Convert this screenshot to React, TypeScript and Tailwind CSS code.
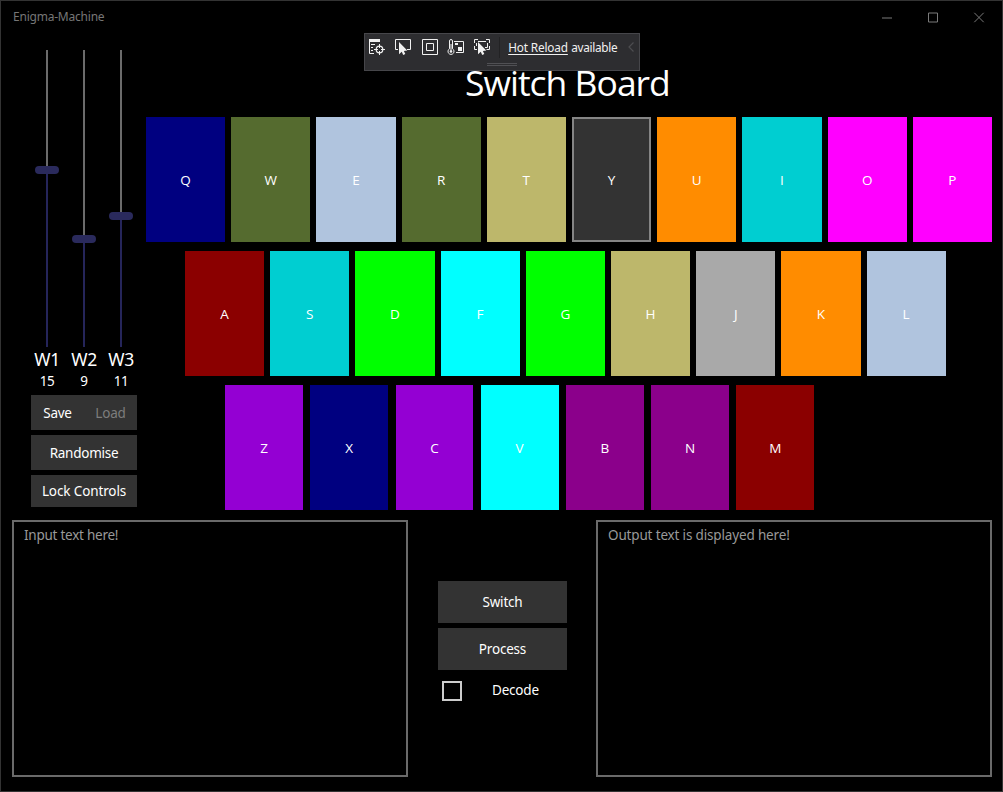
import React from "react";

type KeyDef = { label: string; color: string; selected?: boolean };

const rows: { keys: KeyDef[]; className: string }[] = [
  {
    className: "-ml-[0.1px] gap-[6px] w-[846px]",
    keys: [
      { label: "Q", color: "bg-[#000080]" },
      { label: "W", color: "bg-[#556b2f]" },
      { label: "E", color: "bg-[#b0c4de]" },
      { label: "R", color: "bg-[#556b2f]" },
      { label: "T", color: "bg-[#bdb76b]" },
      { label: "Y", color: "bg-[#333333]", selected: true },
      { label: "U", color: "bg-[#ff8c00]" },
      { label: "I", color: "bg-[#00ced1]" },
      { label: "O", color: "bg-[#ff00ff]" },
      { label: "P", color: "bg-[#ff00ff]" },
    ],
  },
  {
    className: "ml-[38.9px] gap-[6px] w-[760.8px]",
    keys: [
      { label: "A", color: "bg-[#8b0000]" },
      { label: "S", color: "bg-[#00ced1]" },
      { label: "D", color: "bg-[#00ff00]" },
      { label: "F", color: "bg-[#00ffff]" },
      { label: "G", color: "bg-[#00ff00]" },
      { label: "H", color: "bg-[#bdb76b]" },
      { label: "J", color: "bg-[#a9a9a9]" },
      { label: "K", color: "bg-[#ff8c00]" },
      { label: "L", color: "bg-[#b0c4de]" },
    ],
  },
  {
    className: "ml-[79.1px] gap-[7.4px] w-[589px]",
    keys: [
      { label: "Z", color: "bg-[#9400d3]" },
      { label: "X", color: "bg-[#000080]" },
      { label: "C", color: "bg-[#9400d3]" },
      { label: "V", color: "bg-[#00ffff]" },
      { label: "B", color: "bg-[#8b008b]" },
      { label: "N", color: "bg-[#8b008b]" },
      { label: "M", color: "bg-[#8b0000]" },
    ],
  },
];

const wheels = [
  { name: "W1", value: 15, above: "h-[116px]" },
  { name: "W2", value: 9, above: "h-[185px]" },
  { name: "W3", value: 11, above: "h-[162px]" },
];

function Wheel({ name, value, above }: { name: string; value: number; above: string }) {
  return (
    <div className="flex w-9 flex-col items-center">
      <div className="flex h-[297px] flex-col items-center">
        <div className={`w-[2px] shrink-0 bg-[#6b6b6b] ${above}`} />
        <div className="h-2 w-6 shrink-0 rounded-full bg-[#2a2a5c]" />
        <div className="w-[2px] flex-1 bg-[#25255a]" />
      </div>
      <div className="h-[25px] whitespace-nowrap text-[17.5px] leading-6 tracking-[-0.3px]">{name}</div>
      <div className="h-[19px] text-[13.5px] leading-[19px] tracking-[-0.4px]">{value}</div>
    </div>
  );
}

const Cursor = () => (
  <path d="M4 3V15.2L6.8 12.8L8.2 16L10.3 15L8.9 12L12.3 11.4Z" fill="#f1f1f1" stroke="none" />
);

function Icon({ children }: { children: React.ReactNode }) {
  return (
    <svg width="16" height="16" viewBox="0 0 16 16" fill="none" stroke="#f1f1f1" className="shrink-0 overflow-visible">
      {children}
    </svg>
  );
}

function DebugToolbar() {
  return (
    <div className="absolute left-[363px] top-[32px] h-[38px] w-[276px] border border-[#46464a] bg-[#2d2d30]">
      <div className="flex h-[26px] items-center pl-1">
        <div className="flex gap-[10.3px]">
          <Icon>
            <path d="M0 0H11V3H0Z" fill="#f1f1f1" stroke="none" />
            <path d="M.5 3V14.5H5M2 5.5H6M2 8.5H4M2 11.5H4" />
            <circle cx="10.5" cy="10.5" r="3.3" strokeWidth="1.2" />
            <path d="M10.5 5V9M10.5 12V16M5 10.5H9M12 10.5H16" />
          </Icon>
          <Icon>
            <path d="M3 10.5H.5V.5H15.5V10.5H12" />
            <Cursor />
          </Icon>
          <Icon>
            <path d="M.5 .5H15.5V15.5H.5ZM4.5 4.5H11.5V11.5H4.5Z" />
          </Icon>
          <Icon>
            <path d="M1.5 9.8V2A1.5 1.5 0 0 1 4.5 2V9.8A3 3 0 1 1 1.5 9.8Z" />
            <path d="M3 5V12" />
            <circle cx="3" cy="12.5" r="1.3" fill="#f1f1f1" stroke="none" />
            <path d="M6 2.5H15.5V13.5H8" />
            <path d="M7 4H10V6H7ZM10 8H14V12H10Z" fill="#f1f1f1" stroke="none" />
          </Icon>
          <Icon>
            <path d="M.5 4V.5H4M12 .5H15.5V4M15.5 7V10.5H12.5M3 10.5H.5V7M4 2.5H12M13.5 4V8.5H11M2.5 4V7" />
            <Cursor />
          </Icon>
        </div>
        <div className="ml-[9px] h-[21px] w-px bg-[#222224]" />
        <div className="ml-[8px] flex gap-[4px] whitespace-nowrap pb-px text-[11.8px] leading-4 text-[#f1f1f1]">
          <span className="w-[59px] tracking-[-0.16px] underline underline-offset-2">Hot Reload</span>
          <span className="w-[46px] tracking-[-0.3px]">available</span>
        </div>
        <svg width="6" height="10" viewBox="0 0 6 10" className="ml-[11px]" fill="none" stroke="#4d4d50" strokeWidth="1.2">
          <path d="M5.5 .5L1 5L5.5 9.5" />
        </svg>
      </div>
      <div className="ml-[122px] mt-[3px] h-[3px] w-[30px] border-y border-[#505054]" />
    </div>
  );
}

const Button = ({ children, className }: { children: React.ReactNode; className: string }) => (
  <button className={`flex items-center justify-center whitespace-nowrap bg-[#333333] text-[13.5px] ${className}`}>
    {children}
  </button>
);

export default function App() {
  return (
    <div className="relative flex h-[792px] w-[1003px] flex-col overflow-hidden border border-[#333333] bg-black font-['Noto_Sans','Open_Sans',sans-serif] text-white">
      <header className="flex h-[31px] shrink-0 items-center justify-between pl-3 text-[#767676]">
        <span className="text-[12px] leading-4 tracking-[-0.22px]">Enigma-Machine</span>
        <svg width="106" height="12" viewBox="0 0 106 12" className="mr-[14px]" fill="none" stroke="#7a7a7a">
          <path d="M0 7H10M46.5 2H55.5V11H46.5ZM92.3 1.8L101.7 11.2M101.7 1.8L92.3 11.2" />
        </svg>
      </header>

      <main className="flex h-[478px] shrink-0">
        <aside className="w-[144px] shrink-0 pl-[28px] pt-[18px]">
          <div className="flex gap-px">
            {wheels.map((w) => (
              <Wheel key={w.name} {...w} />
            ))}
          </div>
          <div className="ml-[2px] mt-[4px] flex w-[106px] flex-col gap-[5px]">
            <div className="flex bg-[#333333]">
              <Button className="h-[35px] w-[53px] pt-[2px] tracking-[-0.3px]">Save</Button>
              <Button className="h-[35px] w-[53px] pt-[2px] tracking-[-0.2px] text-[#7d7d7d]">Load</Button>
            </div>
            <Button className="h-[35px] pt-[2px] tracking-[-0.25px]">Randomise</Button>
            <Button className="h-8 tracking-[-0.12px]">Lock Controls</Button>
          </div>
        </aside>

        <section className="w-[857px]">
          <h1 className="flex h-[85px] items-end pb-[10px] pl-[320px] font-['Open_Sans',sans-serif] text-[35.5px] leading-[50px] tracking-[-1px]">
            <span className="whitespace-nowrap">Switch Board</span>
          </h1>
          <div className="ml-px flex flex-col gap-[9px] font-['Open_Sans',sans-serif]">
            {rows.map((row, i) => (
              <div key={i} className={`flex h-[125px] ${row.className}`}>
                {row.keys.map((k) => (
                  <button
                    key={k.label}
                    className={`flex flex-1 items-center justify-center pt-[2px] text-[13.5px] ${k.color} ${
                      k.selected ? "inset-ring-2 inset-ring-[#858585]" : ""
                    }`}
                  >
                    {k.label}
                  </button>
                ))}
              </div>
            ))}
          </div>
        </section>
      </main>

      <footer className="flex px-[11px] pt-[10px]">
        <div className="h-[257px] w-[396px] shrink-0 border-2 border-[#6a6a6a] px-[10px] pt-[3px] text-[13.5px] leading-5 tracking-[-0.25px] text-[#999999]">
          Input text here!
        </div>
        <div className="flex w-[188px] shrink-0 flex-col gap-[5px] pl-[30px] pt-[61px]">
          <Button className="h-[42px] w-[129px] tracking-[-0.2px]">Switch</Button>
          <Button className="h-[42px] w-[129px] tracking-[-0.2px]">Process</Button>
          <label className="flex h-8 items-center pl-1 text-[13.5px]">
            <span className="h-5 w-5 border-2 border-[#cccccc]" />
            <span className="ml-[30px] pb-[2px] tracking-[-0.2px]">Decode</span>
          </label>
        </div>
        <div className="h-[257px] w-[396px] shrink-0 border-2 border-[#6a6a6a] px-[10px] pt-[3px] text-[13.5px] leading-5 tracking-[-0.16px] text-[#999999]">
          Output text is displayed here!
        </div>
      </footer>

      <DebugToolbar />
    </div>
  );
}
